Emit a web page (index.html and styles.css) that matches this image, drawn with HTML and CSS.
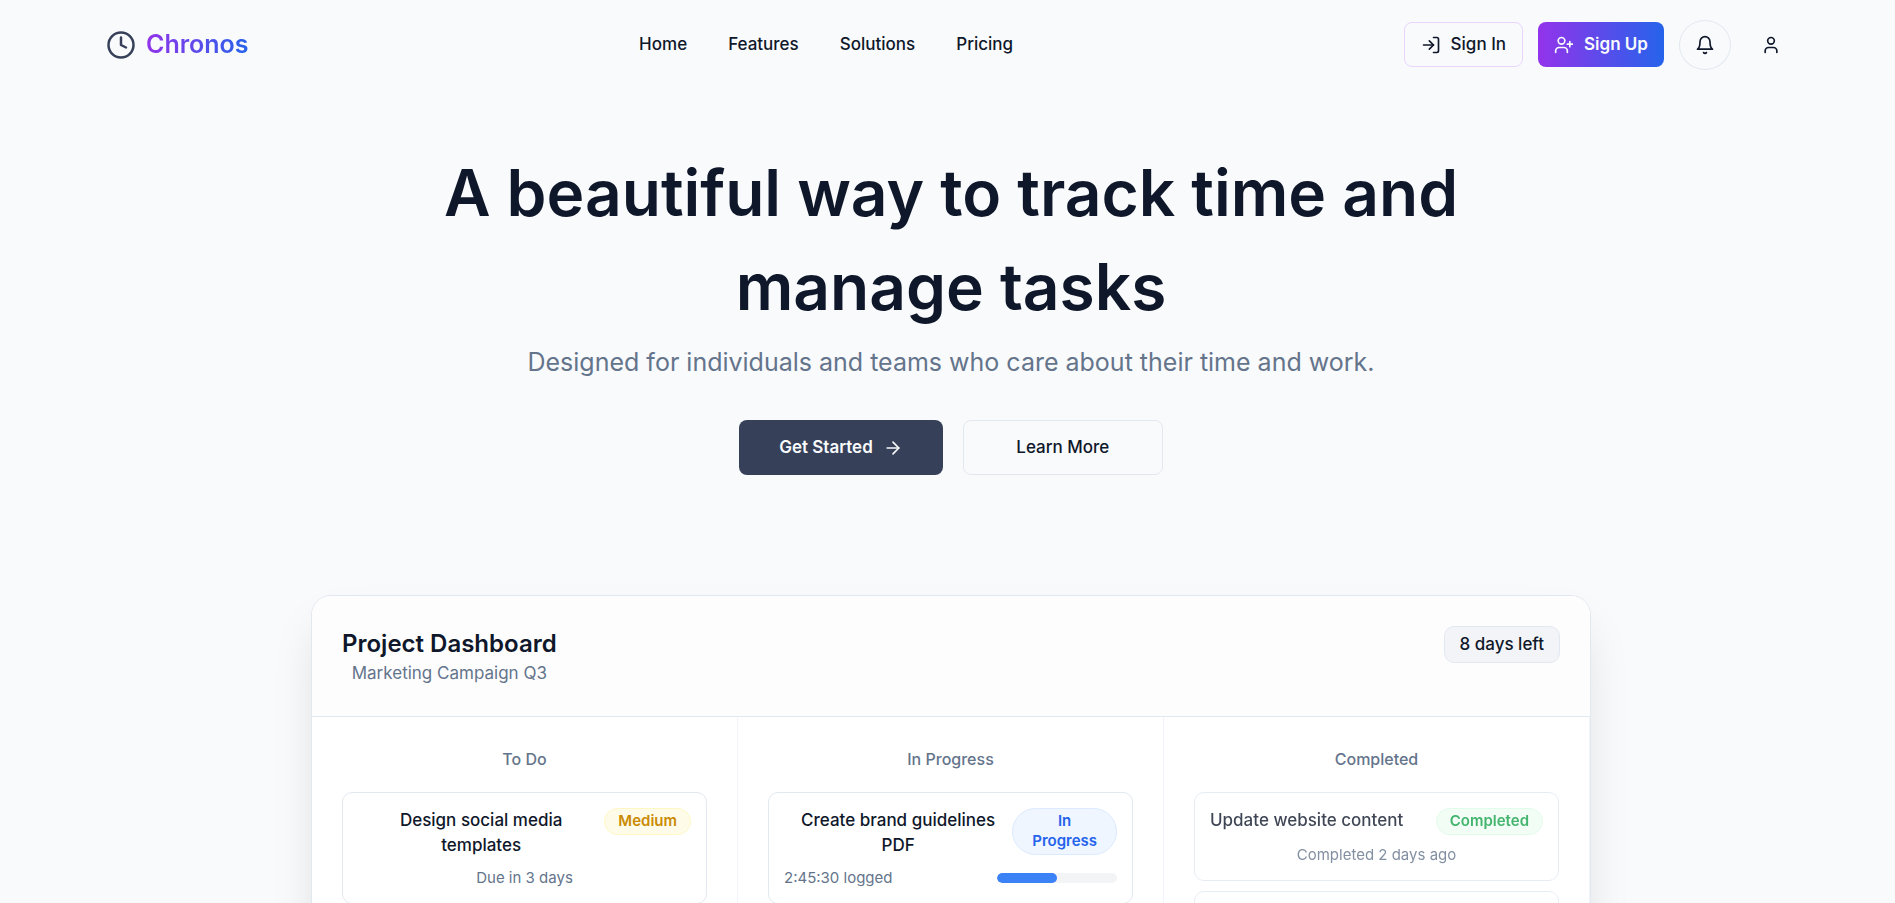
FILE: index.html
```html
<!DOCTYPE html>
<html lang="en">
<head>
<meta charset="utf-8">
<meta name="viewport" content="width=device-width, initial-scale=1">
<title>Chronos</title>
<link rel="stylesheet" href="styles.css">
</head>
<body>
<div class="page">
  <header class="topbar">
    <a class="brand" href="#">
      <svg class="brand-icon" viewBox="0 0 24 24" aria-hidden="true"><circle cx="12" cy="12" r="10"/><path d="M12 6v6l4 2"/></svg>
      <span class="brand-name">Chronos</span>
    </a>
    <nav class="nav" aria-label="Main">
      <a href="#">Home</a>
      <a href="#">Features</a>
      <a href="#">Solutions</a>
      <a href="#">Pricing</a>
    </nav>
    <div class="actions">
      <button class="btn btn-signin" type="button">
        <svg class="icon" viewBox="0 0 24 24" aria-hidden="true"><path d="M15 3h4a2 2 0 0 1 2 2v14a2 2 0 0 1-2 2h-4"/><path d="m10 17 5-5-5-5"/><path d="M15 12H3"/></svg>
        Sign In
      </button>
      <button class="btn btn-signup" type="button">
        <svg class="icon" viewBox="0 0 24 24" aria-hidden="true"><path d="M16 21v-2a4 4 0 0 0-4-4H6a4 4 0 0 0-4 4v2"/><circle cx="9" cy="7" r="4"/><path d="M19 8v6M22 11h-6"/></svg>
        Sign Up
      </button>
      <button class="round round-outline" type="button" aria-label="Notifications">
        <svg class="icon" viewBox="0 0 24 24" aria-hidden="true"><path d="M6 8a6 6 0 0 1 12 0c0 7 3 9 3 9H3s3-2 3-9"/><path d="M10.3 21a1.94 1.94 0 0 0 3.4 0"/></svg>
      </button>
      <button class="round" type="button" aria-label="Account">
        <svg class="icon" viewBox="0 0 24 24" aria-hidden="true"><path d="M19 21v-2a4 4 0 0 0-4-4H9a4 4 0 0 0-4 4v2"/><circle cx="12" cy="7" r="4"/></svg>
      </button>
    </div>
  </header>

  <main class="main">
    <section class="hero">
      <h1 class="hero-title">A beautiful way to track time and<br>manage tasks</h1>
      <p class="hero-sub">Designed for individuals and teams who care about their time and work.</p>
      <div class="hero-actions">
        <button class="btn btn-primary" type="button">
          Get Started
          <svg class="icon" viewBox="0 0 24 24" aria-hidden="true"><path d="M5 12h14"/><path d="m12 5 7 7-7 7"/></svg>
        </button>
        <button class="btn btn-outline" type="button">Learn More</button>
      </div>
    </section>

    <section class="board">
      <div class="board-head">
        <div class="board-titles">
          <h2 class="board-title">Project Dashboard</h2>
          <p class="board-sub">Marketing Campaign Q3</p>
        </div>
        <span class="days">8 days left</span>
      </div>
      <div class="columns">
        <div class="column">
          <h3 class="column-title">To Do</h3>
          <article class="task">
            <div class="task-row">
              <h4 class="task-title">Design social media templates</h4>
              <span class="badge badge-medium">Medium</span>
            </div>
            <p class="task-meta">Due in 3 days</p>
          </article>
        </div>
        <div class="column">
          <h3 class="column-title">In Progress</h3>
          <article class="task">
            <div class="task-row">
              <h4 class="task-title">Create brand guidelines PDF</h4>
              <span class="badge badge-progress">In<br>Progress</span>
            </div>
            <div class="task-foot">
              <span class="task-meta">2:45:30 logged</span>
              <div class="bar"><div class="bar-fill" style="width: 50%"></div></div>
            </div>
          </article>
        </div>
        <div class="column">
          <h3 class="column-title">Completed</h3>
          <article class="task task-done">
            <div class="task-row">
              <h4 class="task-title">Update website content</h4>
              <span class="badge badge-done">Completed</span>
            </div>
            <p class="task-meta">Completed 2 days ago</p>
          </article>
          <article class="task task-done"></article>
        </div>
      </div>
    </section>
  </main>
</div>
</body>
</html>
```

FILE: styles.css
```css
*, *::before, *::after { box-sizing: border-box; }

body {
  margin: 0;
  height: 100vh;
  overflow: hidden;
  background: #f9fafc;
  color: #0f172a;
  font: 500 17px/25px Inter, "Noto Sans", sans-serif;
}

h1, h2, h3, h4, p { margin: 0; }
a { color: inherit; text-decoration: none; }

.page { padding-left: 7px; }

.topbar {
  display: flex;
  align-items: center;
  justify-content: space-between;
  width: 90%;
  max-width: 1690px;
  height: 89px;
  margin: 0 auto;
}

.brand { display: flex; align-items: center; gap: 10px; }
.brand-icon {
  width: 30px; height: 30px;
  fill: none; stroke: #364059; stroke-width: 2;
  stroke-linecap: round; stroke-linejoin: round;
}
.brand-name {
  font-size: 25px; line-height: 35px; font-weight: 600;
  background: linear-gradient(to right, #9333ea, #2563eb);
  -webkit-background-clip: text;
  background-clip: text;
  color: transparent;
}

.nav { display: flex; gap: 41px; }
.actions { display: flex; align-items: center; gap: 15px; }

.icon {
  width: 20px; height: 20px; flex: none;
  fill: none; stroke: currentColor; stroke-width: 2;
  stroke-linecap: round; stroke-linejoin: round;
}

.btn {
  display: inline-flex; align-items: center; justify-content: center; gap: 10px;
  height: 45px; padding: 0 16px;
  border: 1px solid transparent; border-radius: 8px;
  background: none; color: inherit; font: inherit; white-space: nowrap;
}
.btn-signin { border-color: #e9d5ff; }
.btn-signup { border: 0; background: linear-gradient(to right, #9333ea, #2563eb); color: #f8fafc; font-weight: 600; }

.round {
  display: flex; align-items: center; justify-content: center;
  width: 50px; height: 50px; padding: 0;
  border: 0; border-radius: 50%; background: none; color: inherit;
}
.round-outline { width: 52px; border: 1px solid #e2e8f0; }

.main { display: flex; flex-direction: column; align-items: center; }

.hero {
  display: flex; flex-direction: column; align-items: center;
  padding: 57px 20px 120px;
  text-align: center;
}
.hero-title { font-size: 64px; line-height: 94px; font-weight: 600; }
.hero-sub {
  margin-top: 10px;
  font-size: 25px; line-height: 36px; font-weight: 400; color: #64748b;
}
.hero-actions { display: flex; gap: 20px; margin-top: 40px; }
.btn-primary, .btn-outline { height: 55px; padding: 0 40px; }
.btn-primary { border: 0; background: #364059; color: #f8fafc; font-weight: 600; }
.btn-outline { min-width: 200px; border-color: #e2e8f0; }

.board {
  width: calc(100% - 40px);
  max-width: 1280px;
  overflow: hidden;
  border: 1px solid #e2e8f0;
  border-radius: 20px;
  background: #fff;
  box-shadow: 0 25px 50px -12px rgba(0, 0, 0, 0.15);
}
.board-head {
  display: flex; align-items: flex-start; justify-content: space-between;
  padding: 30px;
  border-bottom: 1px solid #e2e8f0;
  background: #fdfdfe;
}
.board-titles { text-align: center; }
.board-title { font-size: 24px; line-height: 35px; font-weight: 600; }
.board-sub { font-size: 17px; font-weight: 400; color: #64748b; }
.days {
  padding: 5px 15px;
  border: 1px solid #e2e8f0; border-radius: 10px;
  background: #f3f4f7;
}

.columns { display: grid; grid-template-columns: repeat(3, 1fr); }
.column {
  display: flex; flex-direction: column; gap: 10px;
  padding: 30px;
  border-right: 1px solid #f1f5f9;
}
.column-title {
  margin-bottom: 10px;
  font-size: 16px; line-height: 25px; font-weight: 500;
  color: #64748b; text-align: center;
}

.task {
  min-height: 89px;
  padding: 15px;
  border: 1px solid #e2e8f0; border-radius: 10px;
  background: #fff;
  text-align: center;
}
.task-done { opacity: 0.8; }
.task-row { display: flex; align-items: flex-start; justify-content: space-between; }
.task-title { font-size: 17px; line-height: 25px; font-weight: 500; }
.task-meta { font-size: 15px; line-height: 20px; font-weight: 400; color: #64748b; }
p.task-meta { margin-top: 10px; }
.task-foot { display: flex; align-items: center; justify-content: space-between; margin-top: 10px; }

.badge {
  flex: none;
  padding: 2px 13px 3px;
  border: 1px solid; border-radius: 24px;
  font-size: 15px; line-height: 20px; font-weight: 600;
}
.badge-medium { border-color: #fef9c3; background: #fefce8; color: #ca8a04; }
.badge-progress { padding-inline: 19px; border-color: #dbeafe; background: #eff6ff; color: #2563eb; }
.badge-done { border-color: #dcfce7; background: #f0fdf4; color: #16a34a; }

.bar { width: 120px; height: 10px; border-radius: 5px; background: #f3f4f6; overflow: hidden; }
.bar-fill { height: 100%; border-radius: 5px; background: #3b82f6; }
```
